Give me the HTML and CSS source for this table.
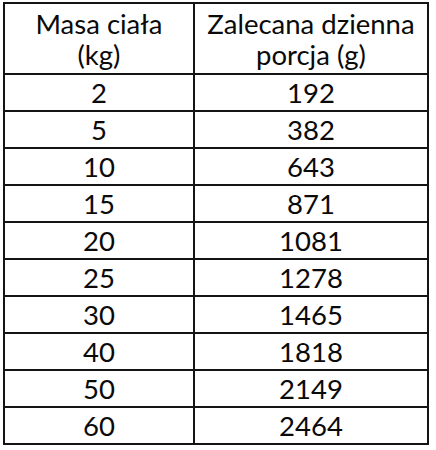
FILE: index.html
```html
<!DOCTYPE html>
<html lang="pl">
<head>
<meta charset="utf-8">
<link rel="stylesheet" href="styles.css">
</head>
<body>
<table class="dose">
  <colgroup>
    <col class="c1">
    <col class="c2">
  </colgroup>
  <thead>
    <tr class="head">
      <th>Masa ciała<br>(kg)</th>
      <th>Zalecana dzienna<br>porcja (g)</th>
    </tr>
  </thead>
  <tbody>
    <tr><td>2</td><td>192</td></tr>
    <tr><td>5</td><td>382</td></tr>
    <tr><td>10</td><td>643</td></tr>
    <tr><td>15</td><td>871</td></tr>
    <tr><td>20</td><td>1081</td></tr>
    <tr><td>25</td><td>1278</td></tr>
    <tr><td>30</td><td>1465</td></tr>
    <tr><td>40</td><td>1818</td></tr>
    <tr><td>50</td><td>2149</td></tr>
    <tr><td>60</td><td>2464</td></tr>
  </tbody>
</table>
</body>
</html>
```

FILE: styles.css
```css
html, body {
  margin: 0;
  padding: 0;
  background: #ffffff;
}
.dose {
  margin: 2px 0 0 3px;
  border-collapse: collapse;
  border: 2px solid #141414;
  font-family: Lato, "Liberation Sans", sans-serif;
  font-size: 27.5px;
  color: #0a0a0a;
  table-layout: fixed;
  width: 426px;
}
.c1 { width: 44.8%; }
.c2 { width: 55.2%; }
.dose th, .dose td {
  border: 2px solid #141414;
  text-align: center;
  vertical-align: middle;
  padding: 0;
  font-weight: normal;
}
.head th {
  height: 69px;
  line-height: 31px;
}
.dose td {
  height: 35px;
  line-height: 30px;
}
```
